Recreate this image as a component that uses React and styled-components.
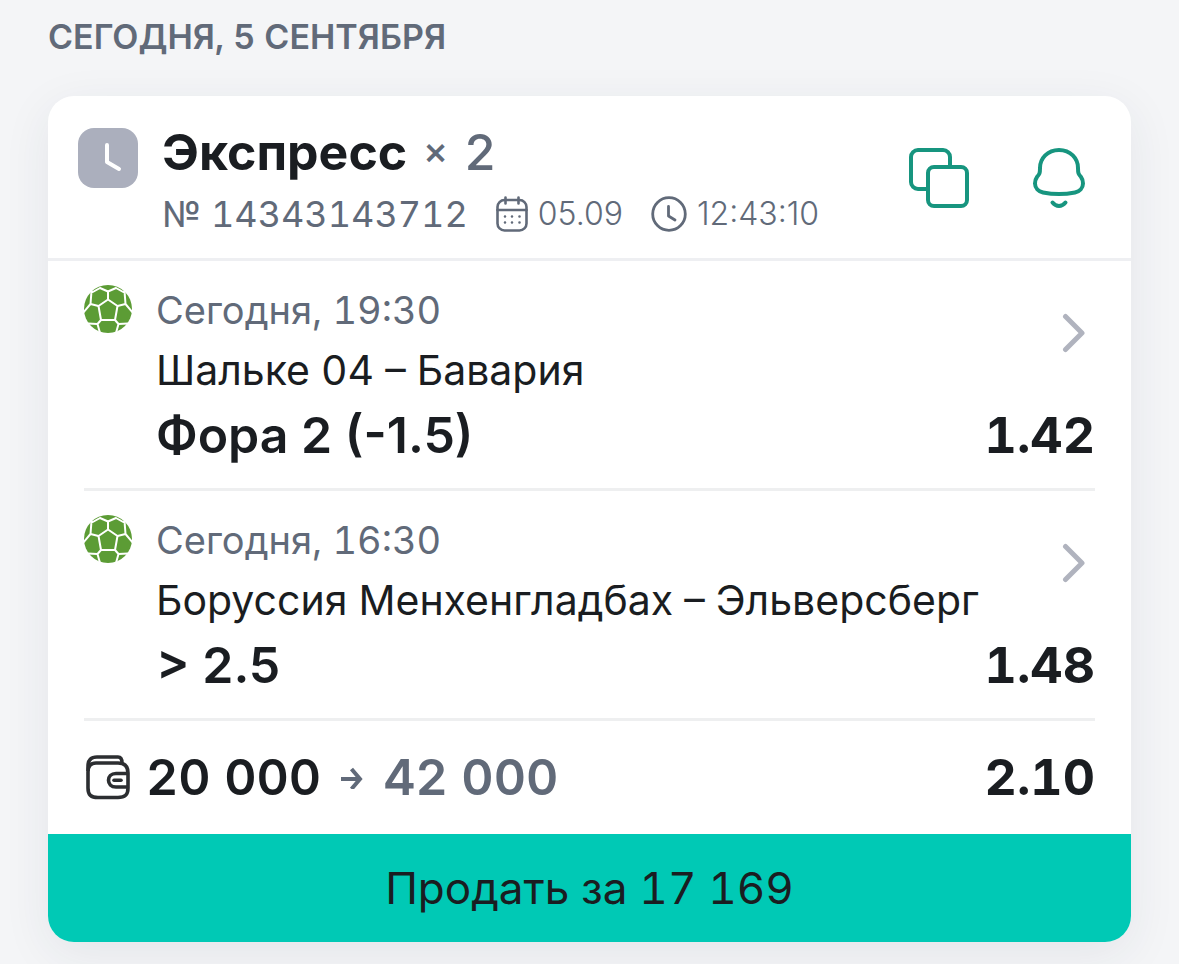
import styled, { createGlobalStyle } from "styled-components";

const bets = [
  { id: 1, time: "Сегодня, 19:30", teams: "Шальке 04 – Бавария", pick: "Фора 2 (-1.5)", odd: "1.42" },
  { id: 2, time: "Сегодня, 16:30", teams: "Боруссия Менхенгладбах – Эльверсберг", pick: "> 2.5", odd: "1.48" },
];

const App = () => {
  return (
    <>
      <GlobalStyle />
      <Page>
        <DayTitle>Сегодня, 5 сентября</DayTitle>
        <Card>
          <Header>
            <Status>
              <StatusIcon />
            </Status>
            <Heading>
              <Title>
                Экспресс <span>×</span> <b>2</b>
              </Title>
              <Meta>
                <Number>№ 14343143712</Number>
                <MetaItem>
                  <CalendarIcon />
                  05.09
                </MetaItem>
                <MetaItem>
                  <ClockIcon />
                  12:43:10
                </MetaItem>
              </Meta>
            </Heading>
            <Actions>
              <IconButton aria-label="Копировать">
                <CopyIcon />
              </IconButton>
              <IconButton aria-label="Уведомления">
                <BellIcon />
              </IconButton>
            </Actions>
          </Header>
          <Body>
            {bets.map((bet) => (
              <Bet key={bet.id}>
                <BallIcon />
                <Details>
                  <Line>
                    <Event>
                      <Time>{bet.time}</Time>
                      <Teams>{bet.teams}</Teams>
                    </Event>
                    <OpenButton aria-label={bet.teams}>
                      <ChevronIcon />
                    </OpenButton>
                  </Line>
                  <Line>
                    <Pick>{bet.pick}</Pick>
                    <Odd>{bet.odd}</Odd>
                  </Line>
                </Details>
              </Bet>
            ))}
            <Total>
              <WalletIcon />
              <Payout>
                <Stake>20 000</Stake>
                <ArrowIcon />
                <Win>42 000</Win>
              </Payout>
              <Odd>2.10</Odd>
            </Total>
          </Body>
          <SellButton>Продать за 17 169</SellButton>
        </Card>
      </Page>
    </>
  );
};

// icons
const StatusIcon = () => (
  <svg width="60" height="60" viewBox="0 0 60 60" fill="none" stroke="#fff" strokeWidth="4" strokeLinecap="round" strokeLinejoin="round" aria-hidden="true">
    <path d="M29 17v17l12 7" />
  </svg>
);

const CalendarIcon = () => (
  <svg width="32" height="36" viewBox="0 0 32 36" fill="none" stroke="currentColor" strokeWidth="2.6" strokeLinecap="round" aria-hidden="true">
    <rect x="1.5" y="4" width="29" height="30.5" rx="7" />
    <path d="M1.5 14h29M9.5 1.5v6M22.5 1.5v6" />
    <path d="M9 20.5h.01M16 20.5h.01M23.5 20.5h.01M9 26.5h.01M16 26.5h.01M23.5 26.5h.01" />
  </svg>
);

const ClockIcon = () => (
  <svg width="36" height="36" viewBox="0 0 36 36" fill="none" stroke="currentColor" strokeWidth="2.8" strokeLinecap="round" strokeLinejoin="round" aria-hidden="true">
    <circle cx="18" cy="18" r="16.3" />
    <path d="M17.5 10.5v9.5l6.5 4" />
  </svg>
);

const CopyIcon = () => (
  <svg width="60" height="60" viewBox="0 0 60 60" fill="none" stroke="currentColor" strokeWidth="4" strokeLinejoin="round" aria-hidden="true">
    <path d="M18 41H9a7 7 0 0 1-7-7V9a7 7 0 0 1 7-7h25a7 7 0 0 1 7 7v9" />
    <rect x="19" y="19" width="39" height="39" rx="6" />
  </svg>
);

const BellIcon = () => (
  <svg width="60" height="60" viewBox="0 0 60 60" fill="none" stroke="currentColor" strokeWidth="4" strokeLinecap="round" strokeLinejoin="round" aria-hidden="true">
    <path d="M30 2C18.5 2 11 10.5 11 20C11 25.5 10.5 26 8 29C6.5 31 6 33 6 35.5C6 40 9.5 43.5 14 44.5C24 46.5 36 46.5 46 44.5C50.5 43.5 54 40 54 35.5C54 33 53.5 31 52 29C49.5 26 49 25.5 49 20C49 10.5 41.5 2 30 2Z" />
    <path d="M23.5 54.5c3.5 4.5 9.5 4.5 13 0" />
  </svg>
);

const BallIcon = () => (
  <svg width="48" height="48" viewBox="0 0 48 48" aria-hidden="true">
    <circle cx="24" cy="24" r="24" fill="#5c9c35" />
    <g fill="none" stroke="#fff" strokeWidth="2" strokeLinejoin="round">
      <path d="M24 14.5L33.5 21L31 35H17L14.5 21Z" />
      <path d="M24 14.5V6.5L16 3L7 8M24 6.5L32 3L41 8M14.5 21L6.5 19L7.5 6M6.5 19L-1 28M33.5 21L41.5 19L40.5 6M41.5 19L49 28" />
      <path d="M17 35L13.5 39L4 38.5M13.5 39L16 48M31 35L34.5 39L44 38.5M34.5 39L32 48" />
    </g>
  </svg>
);

const ChevronIcon = () => (
  <svg width="24" height="40" viewBox="0 0 24 40" fill="none" stroke="currentColor" strokeWidth="5" strokeLinecap="round" strokeLinejoin="round" aria-hidden="true">
    <path d="M3.5 3.5L20 20L3.5 36.5" />
  </svg>
);

const WalletIcon = () => (
  <svg width="48" height="48" viewBox="0 0 48 48" fill="none" stroke="#2c2e31" strokeWidth="3.6" strokeLinejoin="round" aria-hidden="true">
    <path d="M4 18V13C4 7 7 4 13 4H34C37 4 38 6 38 10" />
    <path d="M4 19C4 13 7 10 12 10H34C41 10 44 14 44 20V35C44 42 41 44.5 34 44.5H14C7 44.5 4 42 4 35Z" />
    <path d="M44 20.5H32C22 20.5 22 34 32 34H44" />
    <path d="M30 27.3h7" strokeLinecap="round" />
  </svg>
);

const ArrowIcon = () => (
  <svg width="22" height="24" viewBox="0 0 22 24" fill="none" stroke="#616a79" strokeWidth="4" aria-hidden="true">
    <path d="M0 14H19M10.5 4L19 14L10.5 24" />
  </svg>
);

// styles
const GlobalStyle = createGlobalStyle`
  * {
    margin: 0;
    padding: 0;
    box-sizing: border-box;
  }
  body {
    background: #f4f5f7;
    color: #1a1d21;
    font-family: Inter, sans-serif;
    font-variant-numeric: tabular-nums;
    overflow-x: hidden;
  }
  button {
    border: none;
    background: none;
    font: inherit;
    font-variant-numeric: inherit;
    color: inherit;
    cursor: pointer;
  }
  svg {
    display: block;
    flex-shrink: 0;
  }
`;

const Page = styled.main`
  padding: 12px 48px 22px;
`;

const DayTitle = styled.h2`
  color: #616a79;
  font-size: 34px;
  font-weight: 600;
  line-height: 50px;
  text-transform: uppercase;
`;

const Card = styled.section`
  margin-top: 34px;
  border-radius: 26px;
  background: #fff;
  overflow: hidden;
  box-shadow: 0 12px 48px rgba(40, 55, 80, 0.08);
`;

const Header = styled.header`
  display: flex;
  align-items: flex-start;
  padding: 24px 42px 14px 30px;
  border-bottom: 3px solid #eeeff2;
`;

const Status = styled.div`
  margin-top: 8px;
  border-radius: 16px;
  background: #abafbd;
`;

const Heading = styled.div`
  flex: 1;
  margin-left: 24px;
`;

const Title = styled.h1`
  display: flex;
  align-items: center;
  gap: 16px;
  font-size: 50px;
  font-weight: 700;
  line-height: 64px;
  span,
  b {
    color: #616a79;
    font-weight: 500;
  }
  span {
    font-size: 38px;
    padding-bottom: 4px;
    line-height: 56px;
  }
`;

const Meta = styled.div`
  display: flex;
  align-items: center;
  gap: 28px;
  color: #616a79;
  line-height: 60px;
`;

const Number = styled.span`
  font-size: 36px;
`;

const MetaItem = styled.span`
  display: flex;
  align-items: center;
  gap: 10px;
  font-size: 32px;
  font-weight: 300;
  font-variant-numeric: proportional-nums;
`;

const Actions = styled.div`
  display: flex;
  gap: 60px;
  margin-top: 28px;
  color: #17957f;
`;

const IconButton = styled.button`
  width: 60px;
  height: 60px;
`;

const Body = styled.div`
  padding: 0 36px;
`;

const Bet = styled.article`
  display: flex;
  gap: 24px;
  padding: 19px 0 18px;
  border-bottom: 3px solid #eeeff0;
  > svg {
    margin-top: 5px;
  }
`;

const Details = styled.div`
  flex: 1;
`;

const Line = styled.div`
  display: flex;
  justify-content: space-between;
`;

const Event = styled.div`
  line-height: 60px;
`;

const Time = styled.p`
  color: #616a79;
  font-size: 38px;
`;

const Teams = styled.p`
  font-size: 41px;
`;

const OpenButton = styled.button`
  align-self: flex-start;
  margin: 33px 9px 0 0;
  color: #b0b3be;
`;

const Pick = styled.p`
  font-size: 50px;
  font-weight: 600;
  font-variant-numeric: proportional-nums;
  line-height: 70px;
`;

const Odd = styled.strong`
  font-size: 50px;
  font-weight: 700;
  line-height: 70px;
`;

const Total = styled.div`
  display: flex;
  align-items: center;
  gap: 14px;
  padding: 21px 0 22px;
`;

const Payout = styled.div`
  display: flex;
  flex: 1;
  align-items: center;
  gap: 20px;
`;

const Stake = styled.span`
  font-size: 50px;
  font-weight: 600;
`;

const Win = styled(Stake)`
  color: #616a79;
`;

const SellButton = styled.button`
  display: block;
  width: 100%;
  background: #00c9b5;
  font-size: 44px;
  line-height: 108px;
`;

export default App;
